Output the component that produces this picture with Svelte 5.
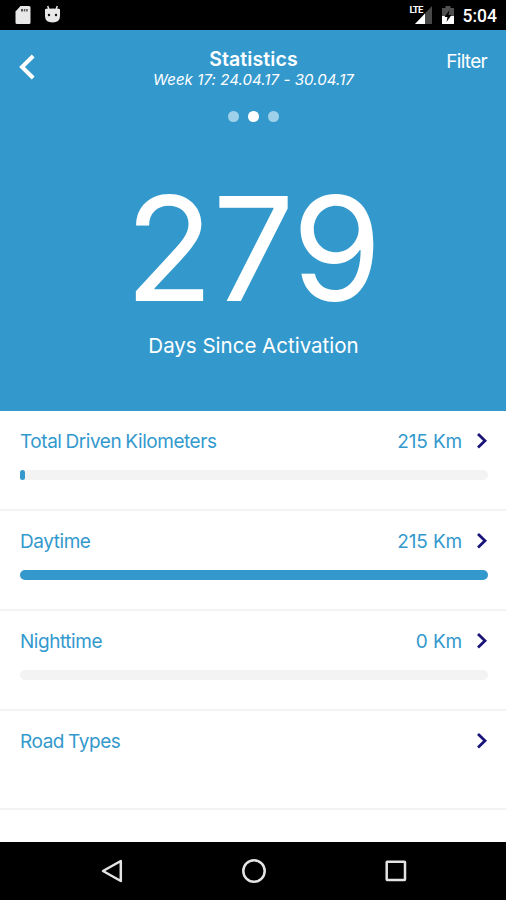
<script>
	const rows = [
		{ label: "Total Driven Kilometers", value: "215 Km", progress: 1.1 },
		{ label: "Daytime", value: "215 Km", progress: 100 },
		{ label: "Nighttime", value: "0 Km", progress: 0 },
		{ label: "Road Types" }
	];
	const pages = [0, 1, 2];
	let activePage = $state(1);
</script>

<div class="screen">
	<div class="status-bar">
		<div class="status-left">
			<svg width="18" height="20" viewBox="0 0 18 20" aria-hidden="true">
				<path d="M7.500 1h8.500q1.500 0 1.500 1.500v15q0 1.500-1.500 1.500h-12q-1.500 0-1.500-1.500V6.500z" fill="#e8e8e8" />
				<path d="M8 4h2v2.500H8zM10.800 4h1.500v2.500h-1.500zM13.200 4h1.500v2.500h-1.500z" fill="#555" />
			</svg>
			<svg width="17" height="19" viewBox="0 0 17 19" aria-hidden="true">
				<path d="M3.700 1 5.200 5M13.300 1 11.800 5" stroke="#e8e8e8" stroke-width="1.500" />
				<path d="M1 4.200q2-1 4-.4 3.500-.8 7 0 2-.6 4 .4V11q0 6.500-7.500 6.500T1 11z" fill="#e8e8e8" />
				<circle cx="5" cy="10" r="1.200" fill="#111" />
				<circle cx="12" cy="10" r="1.200" fill="#111" />
			</svg>
		</div>
		<div class="status-right">
			<div class="signal">
				<svg width="20" height="19" viewBox="0 0 20 19" aria-hidden="true">
					<path d="M19 1v18H2z" fill="#484848" />
					<path d="M12 8.500V19H2z" fill="#fff" />
				</svg>
				<span class="lte">LTE</span>
			</div>
			<svg class="battery" width="14" height="19" viewBox="0 0 14 19" aria-hidden="true">
				<path d="M4.500 1h5v2H13v16H1V3h3.500z" fill="#505050" />
				<path d="M1 11h12v8H1z" fill="#fff" />
				<path d="M8.500 5 3.500 12h3L5.500 17l5-7h-3z" fill="#000" />
			</svg>
			<span class="clock">5:04</span>
		</div>
	</div>

	<section class="hero">
		<header>
			<button type="button" class="back" aria-label="Back">
				<svg width="18" height="28" viewBox="0 0 18 28">
					<path d="M15.200 3 4 14l11.200 11" fill="none" stroke="#fff" stroke-width="4" />
				</svg>
			</button>
			<div class="heading">
				<h1>Statistics</h1>
				<p>Week 17: 24.04.17 - 30.04.17</p>
			</div>
			<button type="button" class="filter">Filter</button>
		</header>
		<div class="dots">
			{#each pages as page}
				<button type="button" class:active={page === activePage} aria-label={`Page ${page + 1}`} onclick={() => (activePage = page)}></button>
			{/each}
		</div>
		<div class="days">279</div>
		<p class="caption">Days Since Activation</p>
	</section>

	<div class="list">
		{#each rows as row}
			<div class="row">
				<div class="line">
					<span class="label">{row.label}</span>
					{#if row.value}<span class="value">{row.value}</span>{/if}
					<svg width="12" height="18" viewBox="0 0 12 18" aria-hidden="true">
						<path d="M2 2l7 6.800L2 15.600" fill="none" stroke="#1a1478" stroke-width="2.800" />
					</svg>
				</div>
				{#if row.progress !== undefined}
					<div class="track"><div class="fill" style={`width: ${row.progress}%`}></div></div>
				{/if}
			</div>
		{/each}
	</div>

	<nav>
		<svg width="24" height="26" viewBox="0 0 24 26" aria-hidden="true">
			<path d="M20.800 3v20L3 13z" />
		</svg>
		<svg width="26" height="26" viewBox="0 0 26 26" aria-hidden="true">
			<circle cx="13" cy="13" r="10.700" />
		</svg>
		<svg width="24" height="26" viewBox="0 0 24 26" aria-hidden="true">
			<rect x="2.700" y="3.700" width="18.300" height="18.300" rx="0.500" />
		</svg>
	</nav>
</div>

<style>
	:global(body) {
		margin: 0;
		background: #fff;
	}

	.screen {
		display: flex;
		flex-direction: column;
		width: 506px;
		height: 900px;
		overflow: hidden;
		background: #fff;
		font-family: Inter, "Liberation Sans", sans-serif;
	}

	h1,
	p { margin: 0; }

	button {
		padding: 0;
		border: 0;
		background: none;
		color: inherit;
		font: inherit;
		cursor: pointer;
	}

	svg { display: block; }

	.status-bar {
		display: flex;
		flex: none;
		justify-content: space-between;
		box-sizing: border-box;
		height: 30px;
		padding: 5px 9px 0 13px;
		background: #000;
		color: #fff;
	}

	.status-left,
	.status-right {
		display: flex;
	}

	.status-left { gap: 13px; }

	.signal {
		position: relative;
		margin-right: 8px;
	}

	.lte {
		position: absolute;
		top: 0;
		left: -3px;
		padding-right: 1px;
		background: #000;
		font: 700 9.500px/10px Roboto, sans-serif;
		letter-spacing: -0.8px;
	}

	.battery { margin-right: 8px; }

	.clock {
		font: 500 17.500px/22px Roboto, sans-serif;
	}

	.hero {
		flex: none;
		height: 381px;
		background: #3399cd;
		color: #fff;
		text-align: center;
	}

	header {
		display: grid;
		grid-template-columns: 80px 1fr 80px;
		height: 80px;
	}

	.back {
		align-self: start;
		justify-self: start;
		margin: 23px 0 0 18px;
	}

	.heading { padding: 17px 0 0 1px; }

	h1 {
		font-size: 19.500px;
		font-weight: 600;
		letter-spacing: 0.100px;
		line-height: 24px;
	}

	.heading p {
		font-size: 15px;
		font-style: italic;
		letter-spacing: 0.080px;
		line-height: 18px;
		white-space: nowrap;
	}

	.filter {
		align-self: start;
		justify-self: end;
		margin: 20px 19px 0 0;
		font-size: 19px;
		letter-spacing: -0.700px;
		line-height: 24px;
	}

	.dots {
		display: flex;
		justify-content: center;
		gap: 9.500px;
		padding: 1px 0 0 1px;
	}

	.dots button {
		width: 10.500px;
		height: 10.500px;
		border-radius: 50%;
		background: #9fd0ea;
	}

	.dots .active { background: #fff; }

	.days {
		margin-top: 52px;
		font-size: 145px;
		font-weight: 400;
		letter-spacing: -1px;
		line-height: 150px;
	}

	.caption {
		margin-top: 8px;
		padding-left: 1px;
		font-size: 20.500px;
		line-height: 27px;
	}

	.list {
		flex: 1;
		color: #3399cd;
	}

	.row {
		box-sizing: border-box;
		height: 99.850px;
		padding: 18px 18px 0 20px;
		border-bottom: 2px solid #f3f3f3;
	}

	.line {
		display: flex;
		align-items: center;
		height: 24px;
		font-size: 19px;
		letter-spacing: -0.450px;
		line-height: 24px;
	}

	.label {
		margin-right: auto;
		padding-top: 2px;
		word-spacing: -0.800px;
	}

	.value {
		margin-right: 14px;
		padding-top: 2px;
		letter-spacing: -0.150px;
	}

	.track {
		height: 10px;
		margin-top: 17.300px;
		border-radius: 5px;
		background: #f3f3f3;
	}

	.fill {
		height: 100%;
		border-radius: 5px;
		background: #3399cd;
	}

	nav {
		display: flex;
		flex: none;
		justify-content: space-between;
		box-sizing: border-box;
		height: 58px;
		padding: 16px 98px 0 100px;
		background: #000;
	}

	nav svg {
		fill: none;
		stroke: #e4e4e4;
		stroke-width: 2.500;
		stroke-linejoin: round;
	}
</style>
